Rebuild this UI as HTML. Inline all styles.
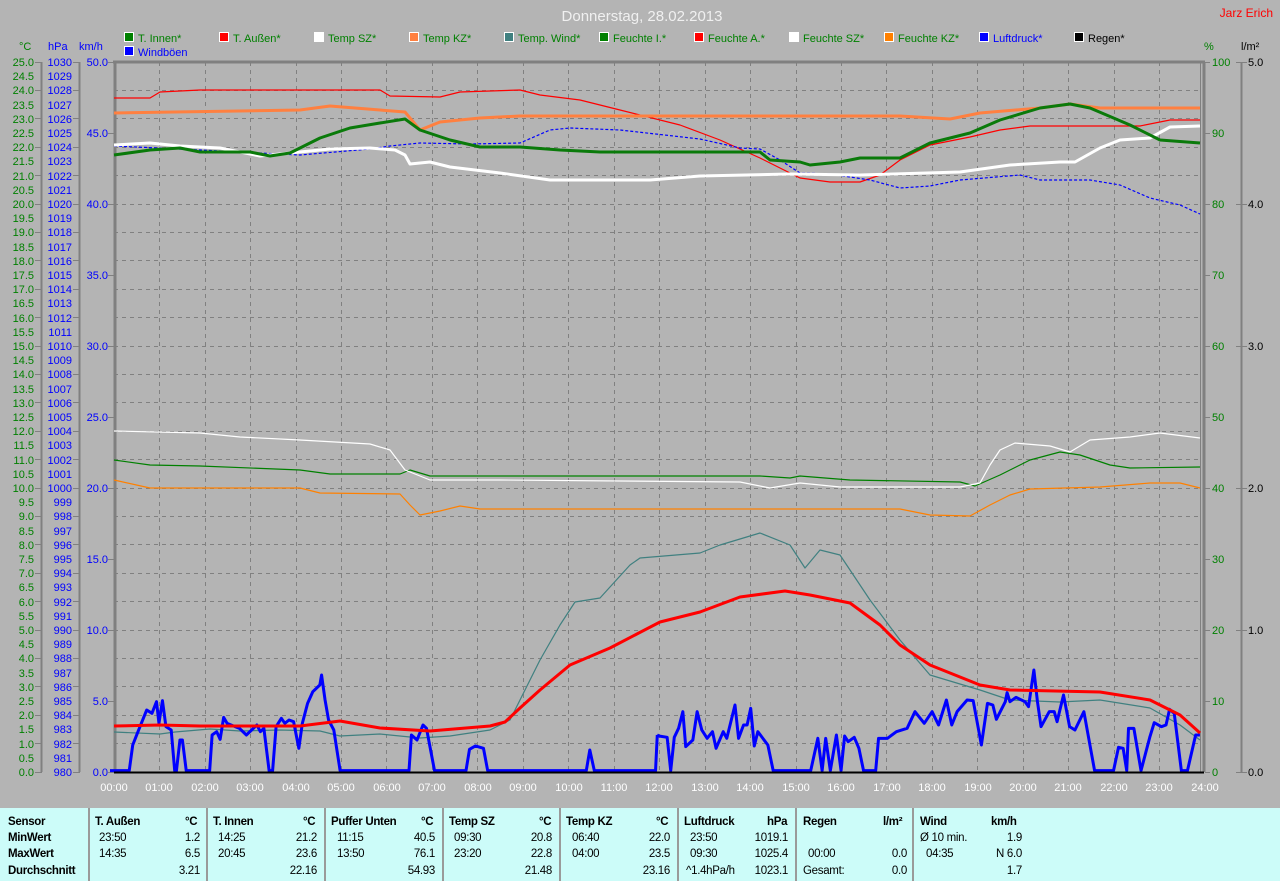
<!DOCTYPE html>
<html><head><meta charset="utf-8"><style>
html,body{margin:0;padding:0;background:#b4b4b4;width:1280px;height:881px;overflow:hidden}
svg{position:absolute;left:0;top:0}
text{font-family:"Liberation Sans",sans-serif;font-size:11px}
.tb{position:absolute;left:0;top:808px;width:1280px;height:73px;background:#ccfcf9;font-family:"Liberation Sans",sans-serif;font-size:11.5px;color:#000}
.tb div{position:absolute;white-space:nowrap;letter-spacing:-0.3px}
.b{font-weight:bold}
.sep{position:absolute;top:0;width:2px;height:73px;background:#9a9a9a}
</style></head><body>
<svg width="1280" height="881" viewBox="0 0 1280 881">
<text x="642" y="21" text-anchor="middle" fill="#f0f0f0" style="font-size:15px">Donnerstag, 28.02.2013</text>
<text x="1273" y="17" text-anchor="end" fill="#ff0000" style="font-size:12px">Jarz Erich</text>
<g stroke="#fff" stroke-width="1">
<rect x="124.5" y="32.5" width="9" height="9" fill="#008000"/>
<rect x="219.5" y="32.5" width="9" height="9" fill="#ff0000"/>
<rect x="314.5" y="32.5" width="9" height="9" fill="#ffffff"/>
<rect x="409.5" y="32.5" width="9" height="9" fill="#ff8040"/>
<rect x="504.5" y="32.5" width="9" height="9" fill="#408080"/>
<rect x="599.5" y="32.5" width="9" height="9" fill="#008000"/>
<rect x="694.5" y="32.5" width="9" height="9" fill="#ff0000"/>
<rect x="789.5" y="32.5" width="9" height="9" fill="#ffffff"/>
<rect x="884.5" y="32.5" width="9" height="9" fill="#ff8000"/>
<rect x="979.5" y="32.5" width="9" height="9" fill="#0000ff"/>
<rect x="1074.5" y="32.5" width="9" height="9" fill="#000000"/>
<rect x="124.5" y="46.5" width="9" height="9" fill="#0000ff"/>
</g>
<g fill="#008000">
<text x="138" y="42">T. Innen*</text>
<text x="233" y="42">T. Außen*</text>
<text x="328" y="42">Temp SZ*</text>
<text x="423" y="42">Temp KZ*</text>
<text x="518" y="42">Temp. Wind*</text>
<text x="613" y="42">Feuchte I.*</text>
<text x="708" y="42">Feuchte A.*</text>
<text x="803" y="42">Feuchte SZ*</text>
<text x="898" y="42">Feuchte KZ*</text>
</g>
<text x="993" y="42" fill="#0000ff">Luftdruck*</text>
<text x="1088" y="42" fill="#000">Regen*</text>
<text x="138" y="56" fill="#0000ff">Windböen</text>
<text x="19" y="50" fill="#008000">°C</text>
<text x="48" y="50" fill="#0000ff">hPa</text>
<text x="79" y="50" fill="#0000ff">km/h</text>
<text x="1204" y="50" fill="#008000">%</text>
<text x="1241" y="50" fill="#000">l/m²</text>
<g stroke="#808080" stroke-width="1" stroke-dasharray="4,4" fill="none">
<path d="M114 90.5H1200M114 118.5H1200M114 147.5H1200M114 175.5H1200M114 204.5H1200M114 232.5H1200M114 260.5H1200M114 289.5H1200M114 317.5H1200M114 346.5H1200M114 374.5H1200M114 402.5H1200M114 431.5H1200M114 459.5H1200M114 488.5H1200M114 516.5H1200M114 544.5H1200M114 573.5H1200M114 601.5H1200M114 630.5H1200M114 658.5H1200M114 686.5H1200M114 715.5H1200M114 743.5H1200"/>
<path d="M159.5 62V772M205.5 62V772M250.5 62V772M296.5 62V772M341.5 62V772M386.5 62V772M432.5 62V772M477.5 62V772M523.5 62V772M568.5 62V772M614.5 62V772M659.5 62V772M705.5 62V772M750.5 62V772M796.5 62V772M841.5 62V772M886.5 62V772M932.5 62V772M977.5 62V772M1023.5 62V772M1068.5 62V772M1114.5 62V772M1159.5 62V772"/>
</g>
<g stroke="#808080" fill="none">
<path d="M115 61V772M113 62H1205" stroke-width="3"/>
<path d="M1200.5 62V772" stroke-width="1"/>
<path d="M1204 62V772" stroke-width="3"/>
<path d="M41.5 62V772M79.5 62V772M1241.5 62V772" stroke-width="2"/>
<path d="M1205 62.5H1210M1205 133.5H1210M1205 204.5H1210M1205 275.5H1210M1205 346.5H1210M1205 417.5H1210M1205 488.5H1210M1205 559.5H1210M1205 630.5H1210M1205 701.5H1210M1205 772.5H1210"/>
<path d="M1236 62.5H1247M1236 204.5H1247M1236 346.5H1247M1236 488.5H1247M1236 630.5H1247M1236 772.5H1247"/>
<path d="M108 62.5H114M108 133.5H114M108 204.5H114M108 275.5H114M108 346.5H114M108 417.5H114M108 488.5H114M108 559.5H114M108 630.5H114M108 701.5H114M108 772.5H114"/>
<path d="M35 62.5H42M35 90.5H42M35 118.5H42M35 147.5H42M35 175.5H42M35 204.5H42M35 232.5H42M35 260.5H42M35 289.5H42M35 317.5H42M35 346.5H42M35 374.5H42M35 402.5H42M35 431.5H42M35 459.5H42M35 488.5H42M35 516.5H42M35 544.5H42M35 573.5H42M35 601.5H42M35 630.5H42M35 658.5H42M35 686.5H42M35 715.5H42M35 743.5H42M35 772.5H42"/>
<path d="M73 62.5H80M73 90.5H80M73 118.5H80M73 147.5H80M73 175.5H80M73 204.5H80M73 232.5H80M73 260.5H80M73 289.5H80M73 317.5H80M73 346.5H80M73 374.5H80M73 402.5H80M73 431.5H80M73 459.5H80M73 488.5H80M73 516.5H80M73 544.5H80M73 573.5H80M73 601.5H80M73 630.5H80M73 658.5H80M73 686.5H80M73 715.5H80M73 743.5H80M73 772.5H80"/>
</g>
<g fill="#008000" text-anchor="end">
<text x="34" y="66">25.0</text><text x="34" y="80">24.5</text><text x="34" y="94">24.0</text><text x="34" y="109">23.5</text><text x="34" y="123">23.0</text><text x="34" y="137">22.5</text><text x="34" y="151">22.0</text><text x="34" y="165">21.5</text><text x="34" y="180">21.0</text><text x="34" y="194">20.5</text><text x="34" y="208">20.0</text><text x="34" y="222">19.5</text><text x="34" y="236">19.0</text><text x="34" y="251">18.5</text><text x="34" y="265">18.0</text><text x="34" y="279">17.5</text><text x="34" y="293">17.0</text><text x="34" y="307">16.5</text><text x="34" y="322">16.0</text><text x="34" y="336">15.5</text><text x="34" y="350">15.0</text><text x="34" y="364">14.5</text><text x="34" y="378">14.0</text><text x="34" y="393">13.5</text><text x="34" y="407">13.0</text><text x="34" y="421">12.5</text><text x="34" y="435">12.0</text><text x="34" y="449">11.5</text><text x="34" y="464">11.0</text><text x="34" y="478">10.5</text><text x="34" y="492">10.0</text><text x="34" y="506">9.5</text><text x="34" y="520">9.0</text><text x="34" y="535">8.5</text><text x="34" y="549">8.0</text><text x="34" y="563">7.5</text><text x="34" y="577">7.0</text><text x="34" y="591">6.5</text><text x="34" y="606">6.0</text><text x="34" y="620">5.5</text><text x="34" y="634">5.0</text><text x="34" y="648">4.5</text><text x="34" y="662">4.0</text><text x="34" y="677">3.5</text><text x="34" y="691">3.0</text><text x="34" y="705">2.5</text><text x="34" y="719">2.0</text><text x="34" y="733">1.5</text><text x="34" y="748">1.0</text><text x="34" y="762">0.5</text><text x="34" y="776">0.0</text>
</g>
<g fill="#0000ff" text-anchor="end">
<text x="72" y="66">1030</text><text x="72" y="80">1029</text><text x="72" y="94">1028</text><text x="72" y="109">1027</text><text x="72" y="123">1026</text><text x="72" y="137">1025</text><text x="72" y="151">1024</text><text x="72" y="165">1023</text><text x="72" y="180">1022</text><text x="72" y="194">1021</text><text x="72" y="208">1020</text><text x="72" y="222">1019</text><text x="72" y="236">1018</text><text x="72" y="251">1017</text><text x="72" y="265">1016</text><text x="72" y="279">1015</text><text x="72" y="293">1014</text><text x="72" y="307">1013</text><text x="72" y="322">1012</text><text x="72" y="336">1011</text><text x="72" y="350">1010</text><text x="72" y="364">1009</text><text x="72" y="378">1008</text><text x="72" y="393">1007</text><text x="72" y="407">1006</text><text x="72" y="421">1005</text><text x="72" y="435">1004</text><text x="72" y="449">1003</text><text x="72" y="464">1002</text><text x="72" y="478">1001</text><text x="72" y="492">1000</text><text x="72" y="506">999</text><text x="72" y="520">998</text><text x="72" y="535">997</text><text x="72" y="549">996</text><text x="72" y="563">995</text><text x="72" y="577">994</text><text x="72" y="591">993</text><text x="72" y="606">992</text><text x="72" y="620">991</text><text x="72" y="634">990</text><text x="72" y="648">989</text><text x="72" y="662">988</text><text x="72" y="677">987</text><text x="72" y="691">986</text><text x="72" y="705">985</text><text x="72" y="719">984</text><text x="72" y="733">983</text><text x="72" y="748">982</text><text x="72" y="762">981</text><text x="72" y="776">980</text>
<text x="108" y="66">50.0</text><text x="108" y="137">45.0</text><text x="108" y="208">40.0</text><text x="108" y="279">35.0</text><text x="108" y="350">30.0</text><text x="108" y="421">25.0</text><text x="108" y="492">20.0</text><text x="108" y="563">15.0</text><text x="108" y="634">10.0</text><text x="108" y="705">5.0</text><text x="108" y="776">0.0</text>
</g>
<g fill="#008000">
<text x="1212" y="66">100</text><text x="1212" y="137">90</text><text x="1212" y="208">80</text><text x="1212" y="279">70</text><text x="1212" y="350">60</text><text x="1212" y="421">50</text><text x="1212" y="492">40</text><text x="1212" y="563">30</text><text x="1212" y="634">20</text><text x="1212" y="705">10</text><text x="1212" y="776">0</text>
</g>
<g fill="#000">
<text x="1248" y="66">5.0</text><text x="1248" y="208">4.0</text><text x="1248" y="350">3.0</text><text x="1248" y="492">2.0</text><text x="1248" y="634">1.0</text><text x="1248" y="776">0.0</text>
</g>
<g fill="#fff" text-anchor="middle" style="font-size:12px">
<text x="114" y="791">00:00</text><text x="159" y="791">01:00</text><text x="205" y="791">02:00</text><text x="250" y="791">03:00</text><text x="296" y="791">04:00</text><text x="341" y="791">05:00</text><text x="387" y="791">06:00</text><text x="432" y="791">07:00</text><text x="478" y="791">08:00</text><text x="523" y="791">09:00</text><text x="569" y="791">10:00</text><text x="614" y="791">11:00</text><text x="659" y="791">12:00</text><text x="705" y="791">13:00</text><text x="750" y="791">14:00</text><text x="796" y="791">15:00</text><text x="841" y="791">16:00</text><text x="887" y="791">17:00</text><text x="932" y="791">18:00</text><text x="978" y="791">19:00</text><text x="1023" y="791">20:00</text><text x="1068" y="791">21:00</text><text x="1114" y="791">22:00</text><text x="1159" y="791">23:00</text><text x="1205" y="791">24:00</text>
</g>
<g fill="none" stroke-linejoin="round">
<polyline stroke="#ff8000" stroke-width="1.2" points="114,480 150,488 300,488 320,493 400,494 410,505 420,515 440,511 460,506 480,509 500,509 900,509 930,515 970,516 990,505 1010,495 1030,489 1100,487 1150,483 1180,483 1200,488"/>
<polyline stroke="#008000" stroke-width="1.2" points="114,460 150,465 200,466 300,470 330,474 400,474 410,470 430,476 760,476 790,478 800,476 850,480 960,482 975,486 1000,475 1030,460 1060,452 1080,455 1110,465 1130,468 1200,467"/>
<polyline stroke="#ffffff" stroke-width="1.2" points="114,431 200,433 240,437 300,440 370,444 390,450 405,470 430,480 500,480 740,482 770,488 800,483 840,487 960,487 980,483 990,465 1000,450 1015,443 1050,446 1070,452 1090,440 1130,437 1160,433 1200,438"/>
<polyline stroke="#ff0000" stroke-width="1.2" points="114,98 150,98 160,92 200,90 380,90 390,96 440,97 460,92 520,90 540,95 580,100 620,110 680,125 720,140 760,158 800,178 830,182 860,182 880,175 900,160 930,145 970,137 1000,130 1030,126 1140,126 1170,120 1200,120"/>
<polyline stroke="#0000ff" stroke-width="1.2" stroke-dasharray="3,2" points="114,146 200,150 240,152 300,155 370,149 390,146 420,143 470,144 520,143 550,130 570,128 620,130 700,139 740,148 760,149 780,160 800,173 830,174 870,180 900,188 930,186 960,180 1020,175 1040,180 1090,180 1120,185 1150,198 1180,205 1200,214"/>
<polyline stroke="#ffffff" stroke-width="3" points="114,145 150,143 180,146 220,148 260,156 290,153 330,149 370,148 395,150 405,155 410,164 430,162 450,167 500,173 550,180 650,180 700,176 790,174 860,175 960,172 1010,165 1060,162 1075,162 1100,148 1120,140 1150,138 1170,127 1200,126"/>
<polyline stroke="#ff8040" stroke-width="3" points="114,113 300,110 330,106 380,110 405,112 420,130 440,122 480,118 520,116 900,116 950,119 980,113 1040,108 1070,104 1100,108 1200,108"/>
<polyline stroke="#0a7a0a" stroke-width="3" points="114,155 150,150 180,148 200,152 250,152 270,156 290,153 320,138 350,128 380,123 405,119 420,130 450,140 480,147 520,147 560,150 600,152 760,152 770,160 800,162 810,165 840,162 860,158 900,158 930,143 970,133 1000,120 1040,108 1070,104 1090,108 1130,125 1160,140 1200,143"/>
<polyline stroke="#408080" stroke-width="1.2" points="114,732 160,734 175,732 210,729 240,731 280,730 320,731 340,736 380,734 420,738 450,736 490,730 510,720 520,700 540,660 560,625 575,602 600,598 630,565 640,558 700,553 720,545 760,533 790,545 805,568 820,550 840,555 870,600 900,640 930,675 980,690 1010,700 1060,702 1100,700 1150,708 1180,725 1200,740"/>
<g transform="translate(110,660) scale(0.3497,0.3333)">
<polyline vector-effect="non-scaling-stroke" stroke="#0000ff" stroke-width="3" points="0,332 55,332 65,255 80,215 105,150 120,160 133,125 140,190 150,122 160,200 175,210 185,332 190,332 200,240 207,240 218,332 285,332 292,225 305,215 315,238 325,172 335,190 370,205 390,225 420,195 430,215 440,205 455,332 465,332 475,200 490,175 500,190 512,180 525,185 540,265 550,190 565,130 580,95 600,75 605,45 615,120 625,180 640,210 658,332 855,332 862,225 878,240 895,195 905,205 928,332 1018,332 1028,268 1045,258 1068,265 1080,332 1362,332 1372,270 1385,332 1560,332 1565,225"/>
</g>
<g transform="translate(650,660) scale(0.3571,0.3333)">
<polyline vector-effect="non-scaling-stroke" stroke="#0000ff" stroke-width="3" points="20,225 25,228 48,232 58,332 68,232 80,205 92,155 100,260 120,240 132,155 145,210 160,235 175,215 185,265 205,215 215,235 238,135 248,235 262,195 272,195 282,145 292,258 302,215 330,255 345,332 450,332 470,235 482,332 492,235 505,332 522,225 535,332 545,228 555,245 572,232 585,265 598,332 632,332 640,235 665,235 690,215 720,205 742,155 768,190 790,155 808,195 830,120 845,195 860,155 888,120 905,122 928,255 945,130 960,135 970,178 995,125 1000,98 1008,125 1025,112 1050,125 1060,140 1075,30 1085,125 1095,200 1118,155 1132,155 1140,185 1158,105 1175,200 1190,210 1215,155 1245,332 1298,332 1312,262 1325,265 1335,332 1340,205 1355,205 1375,332 1400,230 1412,188 1432,200 1445,195 1455,148 1468,160 1488,332 1505,332 1528,225 1540,225"/>
</g>
<polyline stroke="#ff0000" stroke-width="3" points="114,726 160,725 200,726 300,726 340,721 380,728 430,731 490,726 505,722 520,708 540,690 570,665 610,648 660,622 700,612 740,597 785,591 810,595 850,603 880,625 900,645 930,665 980,685 1010,690 1100,692 1150,700 1180,715 1200,733"/>
</g>
<path d="M114 772.5H1204" stroke="#000" stroke-width="2"/>
</svg>
<div class="tb">
<div class="sep" style="left:88px"></div><div class="sep" style="left:206px"></div><div class="sep" style="left:324px"></div><div class="sep" style="left:442px"></div><div class="sep" style="left:559px"></div><div class="sep" style="left:677px"></div><div class="sep" style="left:795px"></div><div class="sep" style="left:912px"></div>
<div class="b" style="left:8px;top:8px">Sensor</div><div class="b" style="left:8px;top:24px">MinWert</div><div class="b" style="left:8px;top:40px">MaxWert</div><div class="b" style="left:8px;top:57px">Durchschnitt</div>
<div class="b" style="left:95px;top:8px">T. Außen</div><div class="b" style="left:185px;top:8px">°C</div>
<div style="left:99px;top:24px">23:50</div><div style="left:99px;top:40px">14:35</div>
<div style="right:1080px;top:24px">1.2</div><div style="right:1080px;top:40px">6.5</div><div style="right:1080px;top:57px">3.21</div>
<div class="b" style="left:213px;top:8px">T. Innen</div><div class="b" style="left:303px;top:8px">°C</div>
<div style="left:218px;top:24px">14:25</div><div style="left:218px;top:40px">20:45</div>
<div style="right:963px;top:24px">21.2</div><div style="right:963px;top:40px">23.6</div><div style="right:963px;top:57px">22.16</div>
<div class="b" style="left:331px;top:8px">Puffer Unten</div><div class="b" style="left:421px;top:8px">°C</div>
<div style="left:337px;top:24px">11:15</div><div style="left:337px;top:40px">13:50</div>
<div style="right:845px;top:24px">40.5</div><div style="right:845px;top:40px">76.1</div><div style="right:845px;top:57px">54.93</div>
<div class="b" style="left:449px;top:8px">Temp SZ</div><div class="b" style="left:539px;top:8px">°C</div>
<div style="left:454px;top:24px">09:30</div><div style="left:454px;top:40px">23:20</div>
<div style="right:728px;top:24px">20.8</div><div style="right:728px;top:40px">22.8</div><div style="right:728px;top:57px">21.48</div>
<div class="b" style="left:566px;top:8px">Temp KZ</div><div class="b" style="left:656px;top:8px">°C</div>
<div style="left:572px;top:24px">06:40</div><div style="left:572px;top:40px">04:00</div>
<div style="right:610px;top:24px">22.0</div><div style="right:610px;top:40px">23.5</div><div style="right:610px;top:57px">23.16</div>
<div class="b" style="left:684px;top:8px">Luftdruck</div><div class="b" style="left:767px;top:8px">hPa</div>
<div style="left:690px;top:24px">23:50</div><div style="left:690px;top:40px">09:30</div><div style="left:686px;top:57px">^1.4hPa/h</div>
<div style="right:492px;top:24px">1019.1</div><div style="right:492px;top:40px">1025.4</div><div style="right:492px;top:57px">1023.1</div>
<div class="b" style="left:803px;top:8px">Regen</div><div class="b" style="left:883px;top:8px">l/m²</div>
<div style="left:808px;top:40px">00:00</div><div style="left:803px;top:57px">Gesamt:</div>
<div style="right:373px;top:40px">0.0</div><div style="right:373px;top:57px">0.0</div>
<div class="b" style="left:920px;top:8px">Wind</div><div class="b" style="left:991px;top:8px">km/h</div>
<div style="left:920px;top:24px">Ø 10 min.</div><div style="left:926px;top:40px">04:35</div>
<div style="right:258px;top:24px">1.9</div><div style="right:258px;top:40px">N 6.0</div><div style="right:258px;top:57px">1.7</div>
</div>
</body></html>
